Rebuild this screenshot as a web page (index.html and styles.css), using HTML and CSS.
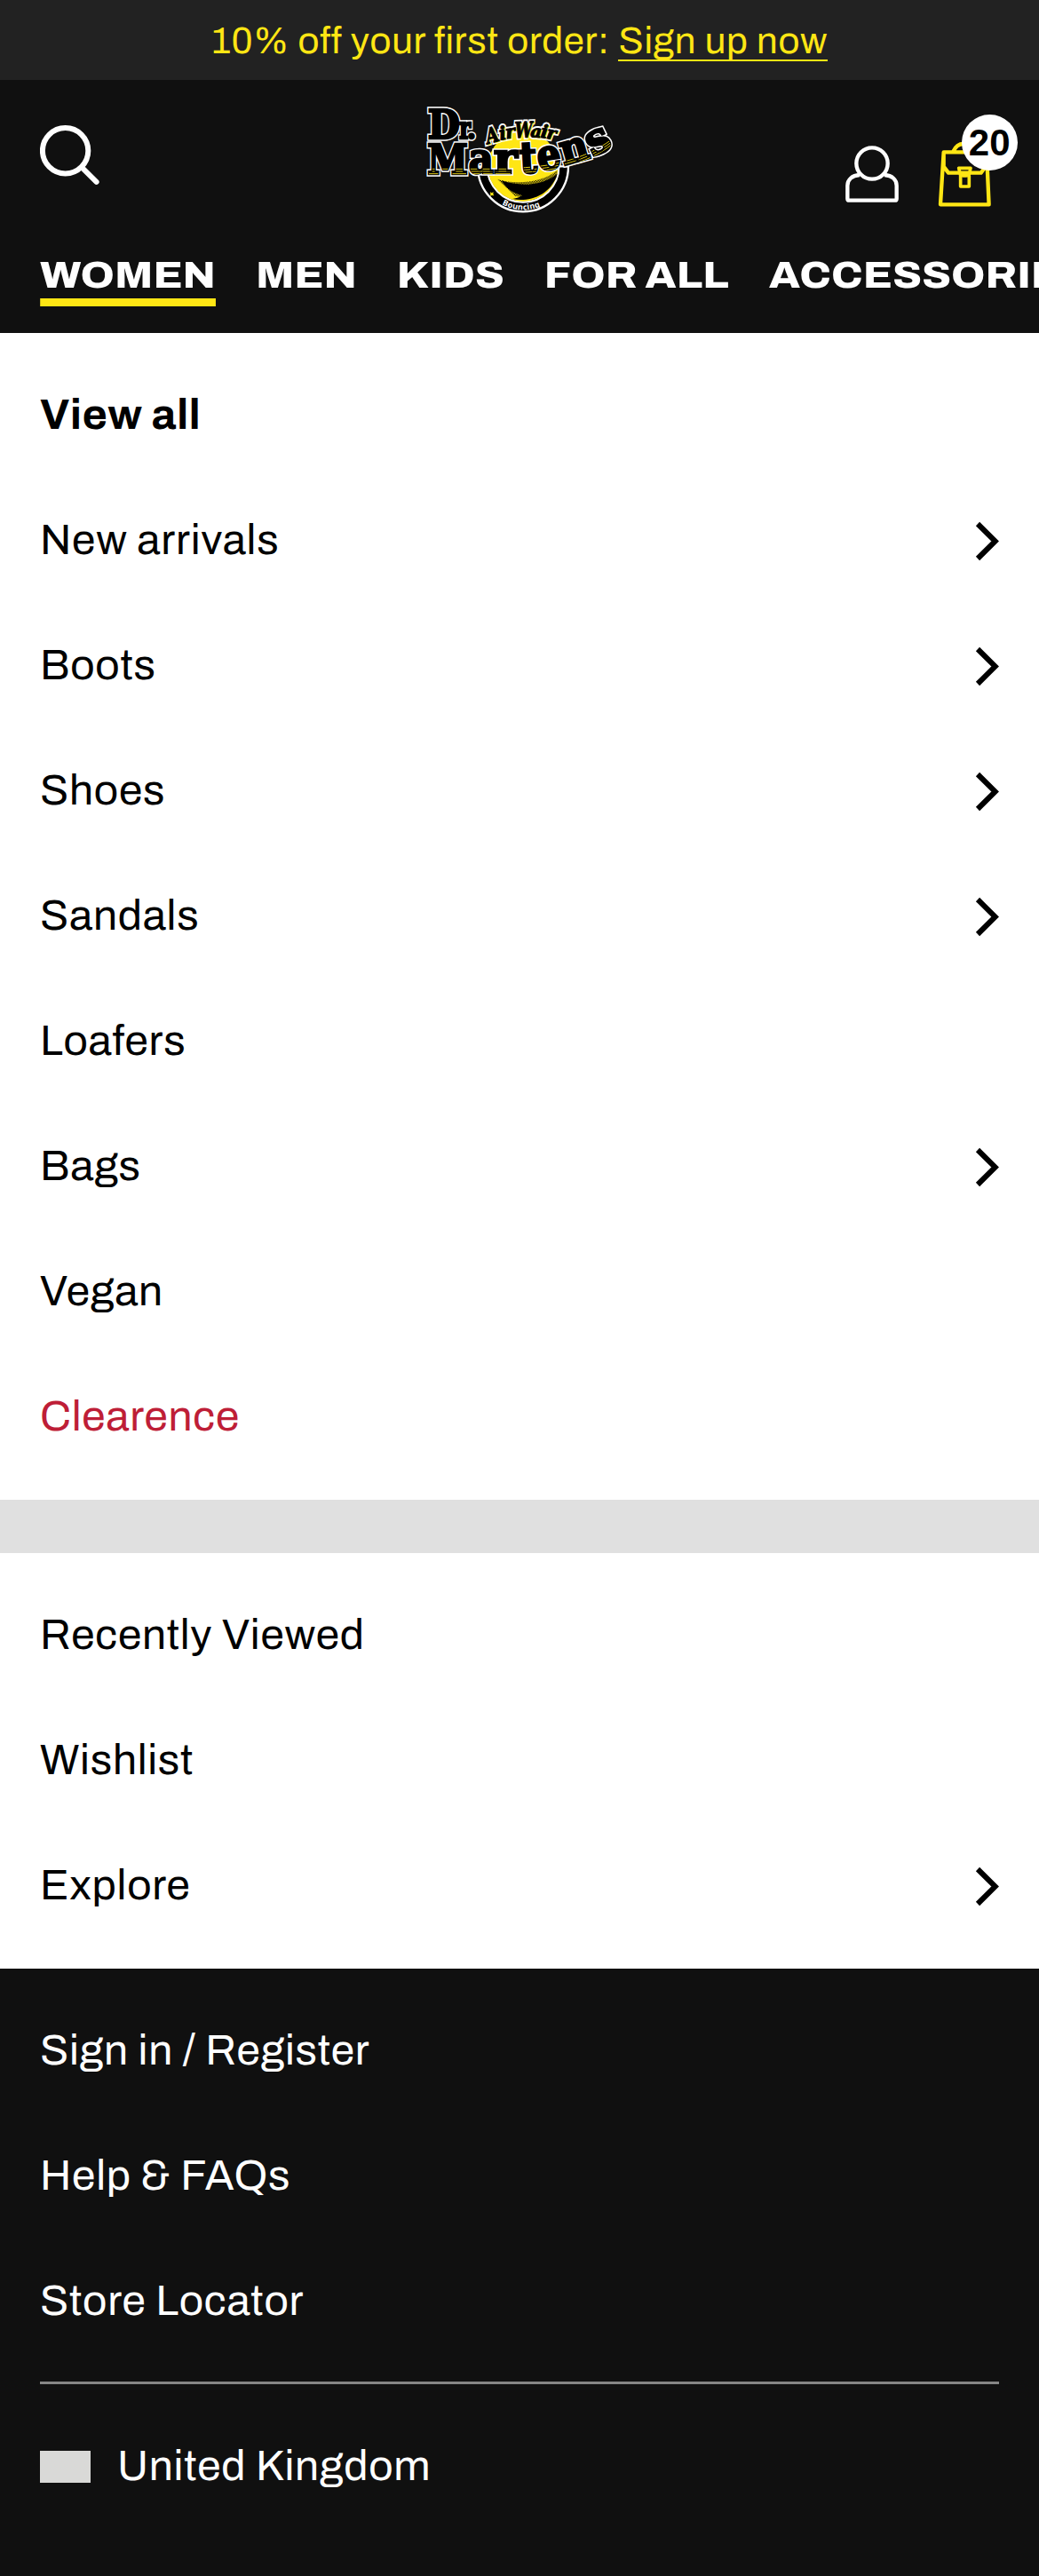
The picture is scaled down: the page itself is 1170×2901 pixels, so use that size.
FILE: index.html
```html
<!DOCTYPE html>
<html lang="en">
<head>
<meta charset="utf-8">
<title>Dr. Martens</title>
<link rel="stylesheet" href="styles.css">
</head>
<body>
<div class="promo"><span class="promo-text">10% off your first order:</span><a class="promo-link">Sign up now</a></div>
<header class="header">
  <div class="bar">
    <svg class="search" viewBox="0 0 68 68"><circle cx="28.6" cy="28.7" r="25.7"/><path d="M47.5 47.8 63.6 63.9"/></svg>
    <svg class="logo" viewBox="0 0 750 450">
      <defs>
        <g id="word" class="slab">
          <text x="65" y="168" font-size="134" textLength="108" lengthAdjust="spacingAndGlyphs">D</text>
          <text x="172" y="168" font-size="98" textLength="38" lengthAdjust="spacingAndGlyphs">r</text>
          <text x="199" y="168" font-size="84" textLength="28" lengthAdjust="spacingAndGlyphs">.</text>
          <text x="64" y="289" font-size="142" textLength="137" lengthAdjust="spacingAndGlyphs">M</text>
          <text x="203" y="286" font-size="143" textLength="84" lengthAdjust="spacingAndGlyphs">a</text>
          <text x="288" y="286" font-size="143" textLength="80" lengthAdjust="spacingAndGlyphs">r</text>
          <text transform="translate(378 285) rotate(-3)" font-size="146" textLength="58" lengthAdjust="spacingAndGlyphs">t</text>
          <text transform="translate(440 277) rotate(-8)" font-size="143" textLength="80" lengthAdjust="spacingAndGlyphs">e</text>
          <text transform="translate(525 259) rotate(-16)" font-size="143" textLength="96" lengthAdjust="spacingAndGlyphs">n</text>
          <text transform="translate(622 230) rotate(-26)" font-size="146" textLength="80" lengthAdjust="spacingAndGlyphs">s</text>
        </g>
        <g id="air" class="script">
          <text transform="translate(268 187) rotate(-16)" font-size="72" textLength="44" lengthAdjust="spacingAndGlyphs">A</text>
          <text transform="translate(310 173) rotate(-10)" font-size="62">i</text>
          <text transform="translate(330 169) rotate(-8)" font-size="62">r</text>
          <text transform="translate(360 166) rotate(-2)" font-size="74" textLength="60" lengthAdjust="spacingAndGlyphs">W</text>
          <text transform="translate(411 162) rotate(5)" font-size="58">a</text>
          <text transform="translate(445 164) rotate(8)" font-size="62">i</text>
          <text transform="translate(464 167) rotate(10)" font-size="60">r</text>
        </g>
        <clipPath id="word-clip" class="slab">
          <text x="64" y="291" font-size="146" textLength="137" lengthAdjust="spacingAndGlyphs">M</text>
          <text x="203" y="289" font-size="148" textLength="84" lengthAdjust="spacingAndGlyphs">a</text>
          <text x="288" y="289" font-size="148" textLength="80" lengthAdjust="spacingAndGlyphs">r</text>
          <text transform="translate(378 288) rotate(-3)" font-size="149" textLength="58" lengthAdjust="spacingAndGlyphs">t</text>
          <text transform="translate(440 280) rotate(-8)" font-size="147" textLength="80" lengthAdjust="spacingAndGlyphs">e</text>
          <text transform="translate(526 262) rotate(-16)" font-size="147" textLength="96" lengthAdjust="spacingAndGlyphs">n</text>
          <text transform="translate(623 233) rotate(-26)" font-size="149" textLength="80" lengthAdjust="spacingAndGlyphs">s</text>
        </clipPath>
        <pattern id="dots" width="8" height="8" patternUnits="userSpaceOnUse"><path d="M0 0h4v4H0zM4 4h4v4H4z"/></pattern>
        <path id="arc" d="M240 262A147 147 0 0 0 534 262"/>
      </defs>
      <path class="ring" d="M234 262A153 153 0 0 0 540 262L508 262A121 121 0 0 1 266 262Z"/>
      <circle class="globe" cx="387" cy="262" r="118.5"/>
      <path fill="url(#dots)" d="M300 305C360 325 450 318 502 276L500 300C470 350 400 375 360 362Z"/>
      <path d="M314 310C338 345 355 352 384 360C376 366 366 370 352 372C400 384 480 364 503 287C450 328 380 332 314 310Z"/>
      <path class="star" d="M276 349l5 3 6-3-1 7 3 5-8-1-5 2 1-6z"/>
      <text class="bouncing"><textPath href="#arc" startOffset="48.5%" text-anchor="middle">Bouncing</textPath></text>
      <use class="halo-s" href="#air"/>
      <use class="shade" href="#air" x="5" y="3"/>
      <use class="ink-s" href="#air"/>
      <use class="halo" href="#word"/>
      <use class="ink" href="#word"/>
      <g class="stripes" clip-path="url(#word-clip)">
        <path d="M60 271H370M60 279H370M60 287H370"/>
        <path d="M370 267C500 264 620 228 700 160M370 275C500 272 625 236 700 168M370 283C500 280 630 244 700 176"/>
      </g>
    </svg>
    <div class="actions">
      <svg class="user" viewBox="60 155 192 203"><circle cx="156" cy="221" r="53"/><path d="M114 260C88 262 73 276 73 296V340Q73 346 79 346H233Q239 346 239 340V296C239 276 224 262 198 260"/></svg>
      <div class="bag-wrap">
        <svg class="bag" viewBox="375 140 190 232"><path d="M398 183H543L551 360H387ZM398 183V232L414 253H524L539 232M430 181Q442 155 465 155H490Q510 158 516 181"/><path class="clasp" d="M449 237H489L483 262H455ZM455 262V299H484V262M462 263H476"/></svg>
        <span class="badge">20</span>
      </div>
    </div>
  </div>
  <nav class="tabs">
    <a class="tab tab-current">WOMEN</a><a class="tab">MEN</a><a class="tab">KIDS</a><a class="tab">FOR ALL</a><a class="tab">ACCESSORIES</a>
  </nav>
</header>
<main>
  <ul class="menu">
    <li class="strong">View all</li>
    <li>New arrivals<svg class="chevron" viewBox="0 0 27 45"><path d="M3 3 22.7 22.5 3 42"/></svg></li>
    <li>Boots<svg class="chevron" viewBox="0 0 27 45"><path d="M3 3 22.7 22.5 3 42"/></svg></li>
    <li>Shoes<svg class="chevron" viewBox="0 0 27 45"><path d="M3 3 22.7 22.5 3 42"/></svg></li>
    <li>Sandals<svg class="chevron" viewBox="0 0 27 45"><path d="M3 3 22.7 22.5 3 42"/></svg></li>
    <li>Loafers</li>
    <li>Bags<svg class="chevron" viewBox="0 0 27 45"><path d="M3 3 22.7 22.5 3 42"/></svg></li>
    <li>Vegan</li>
    <li class="sale">Clearence</li>
  </ul>
  <ul class="menu secondary">
    <li>Recently Viewed</li>
    <li>Wishlist</li>
    <li>Explore<svg class="chevron" viewBox="0 0 27 45"><path d="M3 3 22.7 22.5 3 42"/></svg></li>
  </ul>
</main>
<footer class="footer">
  <ul class="menu account">
    <li>Sign in / Register</li>
    <li>Help &amp; FAQs</li>
    <li>Store Locator</li>
  </ul>
  <div class="country"><span class="flag"></span>United Kingdom</div>
</footer>
</body>
</html>
```
FILE: styles.css
```css
* { box-sizing: border-box; }
body {
  margin: 0;
  overflow-x: hidden;
  background: #fff;
  color: #000;
  font: 48px/1.15 Archivo, "Liberation Sans", Arial, sans-serif;
  letter-spacing: .75px;
}
svg { display: block; flex: none; fill: none; }

.promo {
  display: flex;
  justify-content: center;
  gap: 10px;
  height: 90px;
  padding-top: 22px;
  background: #222;
  color: #ffe614;
  font-size: 42px;
  line-height: 48px;
  letter-spacing: .75px;
}
.promo-link { height: 47px; border-bottom: 2px solid #ffe614; }

.header { height: 285px; background: #101010; color: #fff; overflow: hidden; }
.bar {
  display: grid;
  grid-template-columns: 415px 250px 1fr;
  height: 185px;
  padding: 10px 0 0 45px;
}
.search { width: 68px; height: 68px; margin-top: 41px; stroke: #fff; stroke-width: 6; stroke-linecap: round; }
.logo { width: 250px; height: 150px; letter-spacing: 0; }
.slab { font-family: "DejaVu Serif", serif; font-weight: 700; }
.script { font-family: "DejaVu Serif", serif; font-weight: 700; font-style: italic; }
.logo use, .logo path { fill: #000; }
.logo path[fill] { fill: url(#dots); }
.logo .halo { fill: #fff; stroke: #fff; stroke-width: 17; stroke-miterlimit: 3; }
.logo .halo-s { fill: #fff; stroke: #fff; stroke-width: 14; stroke-miterlimit: 3; }
.logo .ink { stroke: #000; stroke-width: 8; }
.logo .ink-s { stroke: #000; stroke-width: 3; }
.logo .shade { fill: #ffe614; }
.logo .ring { stroke: #fff; stroke-width: 7; }
.globe, .logo .star { fill: #ffe614; }
.logo .stripes path { fill: none; stroke: #ffe614; stroke-width: 2.6; }
.bouncing { fill: #fff; font: 700 27px "Noto Sans", sans-serif; letter-spacing: 1px; }

.actions { display: flex; align-items: flex-end; justify-content: flex-end; gap: 41px; padding: 0 52px 41px 0; }
.user { width: 64px; height: 67.7px; margin-bottom: 4px; stroke: #fff; stroke-width: 13; stroke-linejoin: round; }
.bag-wrap { position: relative; }
.bag { width: 63.3px; height: 77.3px; stroke: #ffe614; stroke-width: 13; stroke-linejoin: round; }
.clasp { stroke-width: 11; }
.badge {
  position: absolute;
  left: 28px;
  top: -28px;
  width: 63px;
  height: 63px;
  border-radius: 50%;
  background: #fff;
  color: #000;
  font: 700 42px/63px "Liberation Sans", Arial, sans-serif;
  letter-spacing: 0;
  text-align: center;
}

/* Widened capitals: the row is stretched as a whole, gaps included */
.tabs {
  display: flex;
  gap: 39.8px;
  padding-left: 39.8px;
  transform: scaleX(1.13);
  transform-origin: 0 0;
  font-size: 42px;
  font-weight: 800;
  line-height: 48px;
  letter-spacing: 0;
  white-space: nowrap;
}
.tab { height: 70px; padding-top: 11px; }
.tab-current { border-bottom: 9px solid #ffe614; }

.menu { margin: 0; padding: 22px 45px 23px; list-style: none; }
.menu li { display: flex; align-items: center; justify-content: space-between; height: 141px; }
.strong { font-weight: 700; }
.menu .sale { color: #be1e37; }
.chevron { width: 27px; height: 45px; margin-top: 1px; stroke: #000; stroke-width: 6; }
.secondary { border-top: 60px solid #e0e0e0; }

.footer { height: 684px; background: #101010; color: #fff; }
.account { padding: 22px 0 20px; margin: 0 45px; border-bottom: 3px solid #868686; }
.country { display: flex; align-items: center; gap: 30px; height: 141px; margin: 22px 45px 0; }
.flag { width: 57px; height: 36px; margin-top: 1px; background: #d9d9d7; }
```
